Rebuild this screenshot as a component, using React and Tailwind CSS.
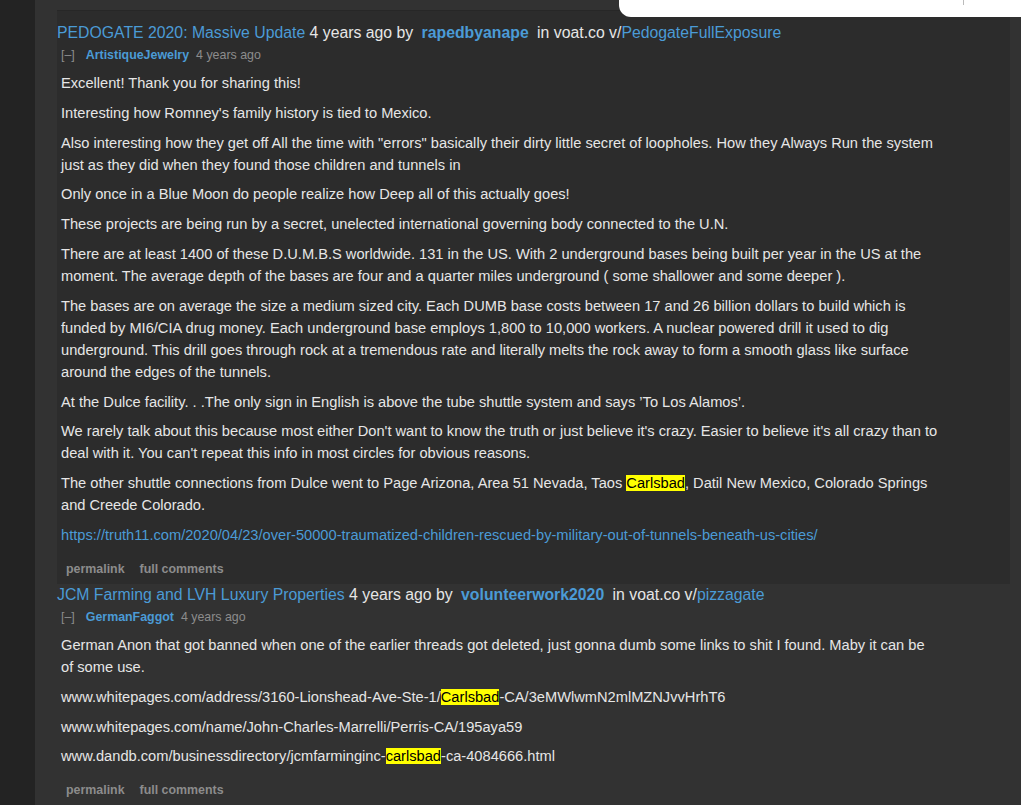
import React from 'react';

const FONT = { fontFamily: '"Liberation Sans", Arial, sans-serif' };

function Hl({ children }) {
  return <span className="bg-[#ffff00] text-black">{children}</span>;
}

function Post({ title, author, sub, user, paras, narrow }) {
  return (
    <>
      <div className="text-[15.8px] leading-[22px] text-[#e6e6e6]">
        <a className="text-[#4b9bd6]">{title}</a> 4 years ago by{' '}
        <a className="ml-[4px] mr-[4px] font-bold text-[#4b9bd6]">{author}</a> in voat.co v/
        <a className="text-[#4b9bd6]">{sub}</a>
      </div>
      <div className="pl-[4px]">
        <div className="flex items-center text-[12.4px] leading-[22px]">
          <span className="text-[#8c8c8c]">[–]</span>
          <a className="ml-[11px] font-bold text-[#4b9bd6]">{user}</a>
          <span className="ml-[7px] text-[#8c8c8c]">4 years ago</span>
        </div>
        <div className={`mt-[6px] text-[14.65px] leading-[22px] text-[#e6e6e6] ${narrow ? 'max-w-[878px]' : 'max-w-[884px]'}`}>
          {paras.map((p, i) => (
            <p key={i} className="mb-[7.8px] last:mb-0">{p}</p>
          ))}
        </div>
        <div className="mt-[12px] flex pl-[5px] text-[12.4px] font-bold leading-[22px] text-[#8c8c8c]">
          <a>permalink</a>
          <a className="ml-[15px]">full comments</a>
        </div>
      </div>
    </>
  );
}

export default function App() {
  const first = [
    'Excellent! Thank you for sharing this!',
    "Interesting how Romney's family history is tied to Mexico.",
    'Also interesting how they get off All the time with "errors" basically their dirty little secret of loopholes. How they Always Run the system just as they did when they found those children and tunnels in',
    'Only once in a Blue Moon do people realize how Deep all of this actually goes!',
    'These projects are being run by a secret, unelected international governing body connected to the U.N.',
    'There are at least 1400 of these D.U.M.B.S worldwide. 131 in the US. With 2 underground bases being built per year in the US at the moment. The average depth of the bases are four and a quarter miles underground ( some shallower and some deeper ).',
    'The bases are on average the size a medium sized city. Each DUMB base costs between 17 and 26 billion dollars to build which is funded by MI6/CIA drug money. Each underground base employs 1,800 to 10,000 workers. A nuclear powered drill it used to dig underground. This drill goes through rock at a tremendous rate and literally melts the rock away to form a smooth glass like surface around the edges of the tunnels.',
    'At the Dulce facility. . .The only sign in English is above the tube shuttle system and says \u2019To Los Alamos\u2019.',
    "We rarely talk about this because most either Don't want to know the truth or just believe it's crazy. Easier to believe it's all crazy than to deal with it. You can't repeat this info in most circles for obvious reasons.",
    <>The other shuttle connections from Dulce went to Page Arizona, Area 51 Nevada, Taos <Hl>Carlsbad</Hl>, Datil New Mexico, Colorado Springs and Creede Colorado.</>,
    <a className="text-[#4b9bd6]">https://truth11.com/2020/04/23/over-50000-traumatized-children-rescued-by-military-out-of-tunnels-beneath-us-cities/</a>,
  ];
  const second = [
    'German Anon that got banned when one of the earlier threads got deleted, just gonna dumb some links to shit I found. Maby it can be of some use.',
    <>www.whitepages.com/address/3160-Lionshead-Ave-Ste-1/<Hl>Carlsbad</Hl>-CA/3eMWlwmN2mlMZNJvvHrhT6</>,
    'www.whitepages.com/name/John-Charles-Marrelli/Perris-CA/195aya59',
    <>www.dandb.com/businessdirectory/jcmfarminginc-<Hl>carlsbad</Hl>-ca-4084666.html</>,
  ];

  return (
    <div className="relative flex min-h-[805px] overflow-hidden" style={FONT}>
      <div className="w-[35px] shrink-0 bg-[#232323]" />
      <div className="flex-1 bg-[#323232] pt-[10px] pl-[22px] pr-[11px]">
        <div className="border-t border-[#272727] bg-[#2c2c2c] pt-[11px] pb-[4px]">
          <Post
            title="PEDOGATE 2020: Massive Update"
            author="rapedbyanape"
            sub="PedogateFullExposure"
            user="ArtistiqueJewelry"
            paras={first}
          />
        </div>
        <div>
          <Post
            title="JCM Farming and LVH Luxury Properties"
            author="volunteerwork2020"
            sub="pizzagate"
            user="GermanFaggot"
            paras={second}
            narrow
          />
        </div>
      </div>
      <div className="absolute right-0 top-0 h-[17px] w-[402px] rounded-bl-[12px] bg-white">
        <div className="absolute right-[57px] top-0 h-[5px] w-px bg-[#bbbbbb]" />
      </div>
    </div>
  );
}
